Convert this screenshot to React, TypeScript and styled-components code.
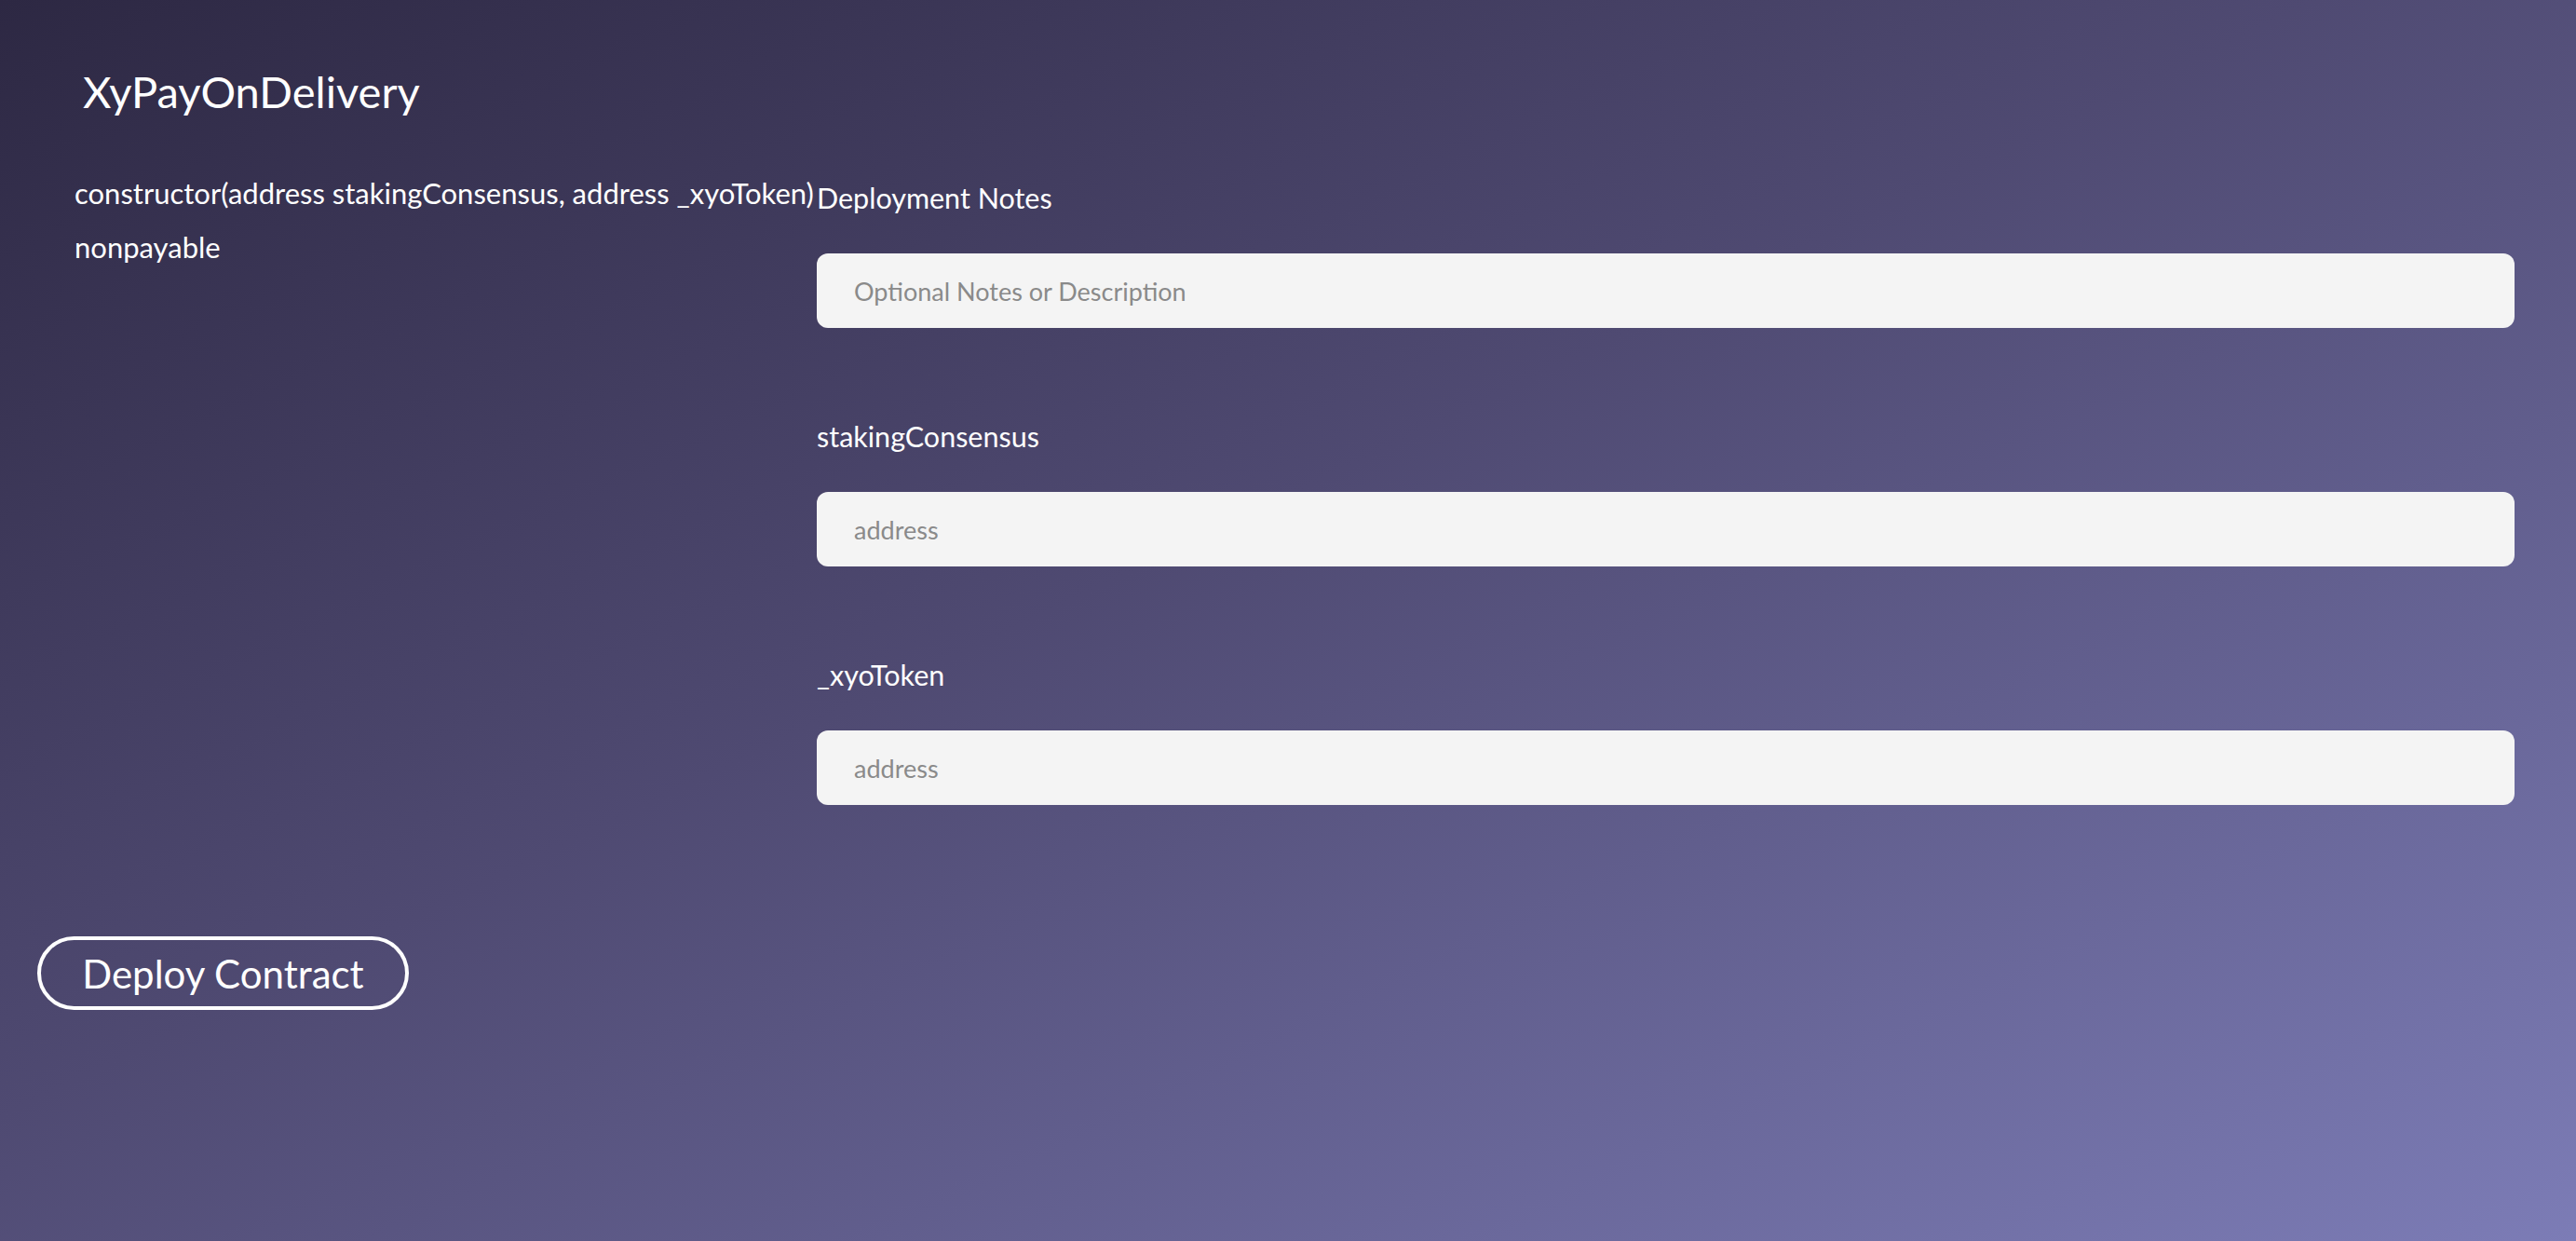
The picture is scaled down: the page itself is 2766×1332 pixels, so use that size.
import React from "react";
import styled, { createGlobalStyle } from "styled-components";

const GlobalStyle = createGlobalStyle`
  html, body {
    margin: 0;
    padding: 0;
  }
  body {
    font-family: Lato, "Liberation Sans", sans-serif;
    color: #ffffff;
  }
  * { box-sizing: border-box; }
`;

const Page = styled.div`
  min-height: 1332px;
  width: 100%;
  background: linear-gradient(to bottom right, #2d2843 0%, #4f4a72 45%, #7c7cb6 100%);
  padding: 0 66px 0 40px;
  overflow: hidden;
`;

const Title = styled.h1`
  margin: 69px 0 0 49px;
  font-size: 47px;
  line-height: 58px;
  font-weight: 400;
`;

const Row = styled.div`
  display: flex;
  margin-top: 63px;
`;

const LeftCol = styled.div`
  width: 837px;
  flex-shrink: 0;
  padding-left: 40px;
`;

const Signature = styled.div`
  font-size: 31px;
  line-height: 34px;
  white-space: nowrap;
`;

const Mutability = styled.div`
  font-size: 31px;
  line-height: 34px;
  margin-top: 24px;
`;

const RightCol = styled.div`
  flex: 1;
  padding-top: 5px;
  display: flex;
  flex-direction: column;
`;

const Field = styled.div`
  display: flex;
  flex-direction: column;
  margin-bottom: 99px;
`;

const Label = styled.label`
  font-size: 30.5px;
  line-height: 34px;
  margin-bottom: 43px;
`;

const Input = styled.input`
  height: 80px;
  width: 100%;
  border: none;
  border-radius: 12px;
  background: #f4f4f4;
  padding: 0 40px;
  font-family: Lato, "Liberation Sans", sans-serif;
  font-size: 27px;
  color: #333;
  outline: none;
  &::placeholder {
    color: #8a8a8a;
  }
`;

const DeployButton = styled.button`
  margin-top: 42px;
  width: 399px;
  height: 79px;
  border: 4px solid #ffffff;
  border-radius: 40px;
  background: transparent;
  color: #ffffff;
  font-family: Lato, "Liberation Sans", sans-serif;
  font-size: 42px;
  padding: 0;
  cursor: pointer;
`;

const fields = [
  { label: "Deployment Notes", placeholder: "Optional Notes or Description" },
  { label: "stakingConsensus", placeholder: "address" },
  { label: "_xyoToken", placeholder: "address" },
];

export default function App() {
  return (
    <>
      <GlobalStyle />
      <Page>
        <Title>XyPayOnDelivery</Title>
        <Row>
          <LeftCol>
            <Signature>constructor(address stakingConsensus, address _xyoToken)</Signature>
            <Mutability>nonpayable</Mutability>
          </LeftCol>
          <RightCol>
            {fields.map((f) => (
              <Field key={f.label}>
                <Label>{f.label}</Label>
                <Input placeholder={f.placeholder} />
              </Field>
            ))}
          </RightCol>
        </Row>
        <DeployButton>Deploy Contract</DeployButton>
      </Page>
    </>
  );
}
